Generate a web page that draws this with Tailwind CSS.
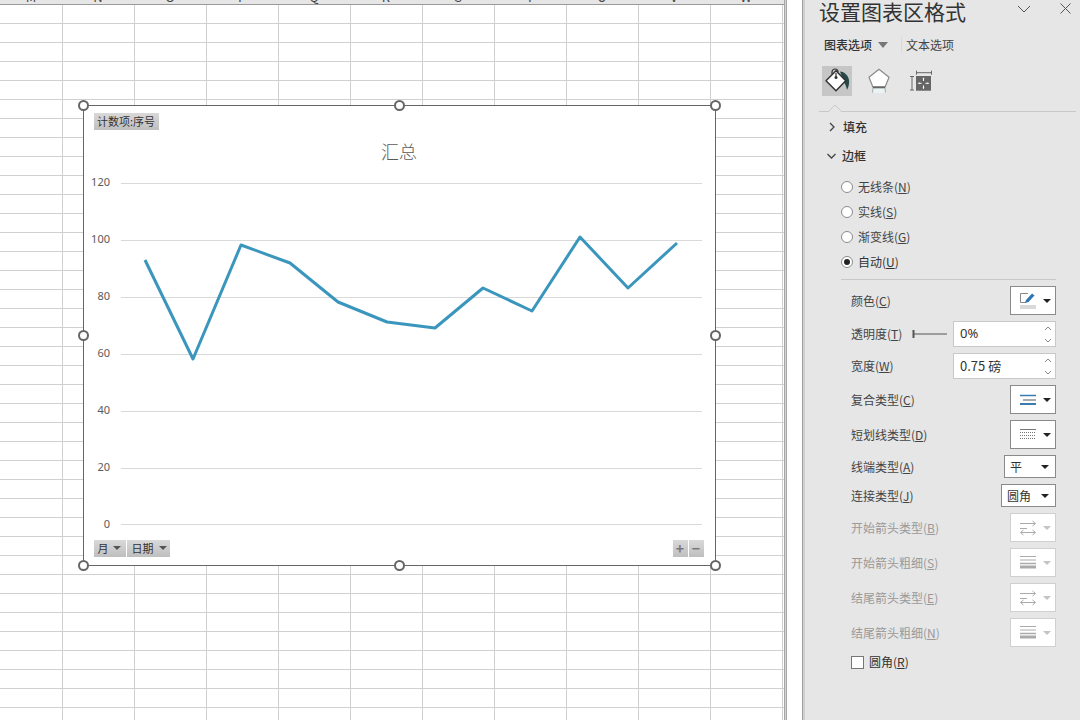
<!DOCTYPE html>
<html lang="zh-CN">
  <head>
    <meta charset="UTF-8" />
    <title>设置图表区格式</title>
    <script src="https://cdn.jsdelivr.net/npm/@tailwindcss/browser@4"></script>
  </head>
  <body class="w-[1080px] h-[720px] overflow-hidden bg-white font-['Noto_Sans_CJK_SC','Noto_Sans',sans-serif] text-xs">
    <div class="flex h-[720px]">
      <!-- sheet -->
      <div class="relative w-[784px] h-full overflow-hidden">
        <div class="flex h-[5px] overflow-hidden bg-[#e6e6e6] border-b border-[#9a9a9a] text-[#444] text-[13px] leading-none">
          <div class="w-[62px] shrink-0 text-center -mt-[10px]">M</div>
          <div class="w-[72px] shrink-0 text-center -mt-[10px]">N</div>
          <div class="w-[72px] shrink-0 text-center -mt-[10px]">O</div>
          <div class="w-[72px] shrink-0 text-center -mt-[10px]">P</div>
          <div class="w-[72px] shrink-0 text-center -mt-[10px]">Q</div>
          <div class="w-[72px] shrink-0 text-center -mt-[10px]">R</div>
          <div class="w-[72px] shrink-0 text-center -mt-[10px]">S</div>
          <div class="w-[72px] shrink-0 text-center -mt-[10px]">T</div>
          <div class="w-[72px] shrink-0 text-center -mt-[10px]">U</div>
          <div class="w-[72px] shrink-0 text-center -mt-[10px]">V</div>
          <div class="w-[72px] shrink-0 text-center -mt-[10px]">W</div>
        </div>
        <div class="h-[715px] bg-[linear-gradient(to_right,transparent_62px,#d0d0d0_62px,#d0d0d0_63px,transparent_63px),linear-gradient(to_bottom,transparent_18px,#d0d0d0_18px)] bg-[length:72px_19px,100%_19px] bg-[position:0_0,0_0]"></div>

        <!-- chart -->
        <div class="absolute left-[83px] top-[105px] w-[633px] h-[461px] bg-white border-[1.5px] border-[#666]">
          <svg class="absolute -left-[1.5px] -top-[1.5px]" width="633" height="461" viewBox="83 105 633 461" fill="none">
            <g stroke="#d9d9d9">
              <path d="M121 183.500H702M121 240.500H702M121 297.500H702M121 354.500H702M121 411.500H702M121 468.500H702M121 524.500H702" />
            </g>
            <g fill="#595959" font-size="11" text-anchor="end" font-family="Noto Sans, sans-serif" opacity="0.99">
              <text x="110" y="186">120</text>
              <text x="110" y="243">100</text>
              <text x="110" y="300">80</text>
              <text x="110" y="357">60</text>
              <text x="110" y="414">40</text>
              <text x="110" y="471">20</text>
              <text x="110" y="528">0</text>
            </g>
            <text x="399" y="159" text-anchor="middle" fill="#595959" font-size="18" font-weight="300" opacity="0.99">汇总</text>
            <polyline stroke="#3a96bd" stroke-width="3" stroke-linejoin="round" points="145,260 193,359 241,245 290,263 338,302 387,322 435,328 483,288 532,311 580,237 628,288 677,243" />
          </svg>
          <div class="absolute left-[9.500px] top-[6.500px] w-[65px] h-[17px] flex items-center justify-center bg-gradient-to-b from-[#d9d9d9] to-[#bfbfbf] text-[#333] text-[11px] leading-none whitespace-nowrap">计数项:序号</div>
          <div class="absolute left-[9.500px] top-[433.500px] flex gap-px">
            <div class="h-[17px] w-[32px] pl-[4px] flex items-center gap-[4px] bg-gradient-to-b from-[#d9d9d9] to-[#bfbfbf] text-[#333] text-[11px] leading-none">月<span class="w-0 h-0 border-x-[4px] border-x-transparent border-t-[4px] border-t-[#555]"></span></div>
            <div class="h-[17px] w-[43px] pl-[5px] flex items-center gap-[5px] bg-gradient-to-b from-[#d9d9d9] to-[#bfbfbf] text-[#333] text-[11px] leading-none">日期<span class="w-0 h-0 border-x-[4px] border-x-transparent border-t-[4px] border-t-[#555]"></span></div>
          </div>
          <div class="absolute left-[588.500px] top-[433.500px] flex gap-px">
            <div class="w-[15px] h-[17px] flex items-center justify-center bg-gradient-to-b from-[#d9d9d9] to-[#bfbfbf] text-[#777] text-[14px] font-bold leading-none">+</div>
            <div class="w-[15px] h-[17px] flex items-center justify-center bg-gradient-to-b from-[#d9d9d9] to-[#bfbfbf] text-[#777] text-[14px] font-bold leading-none">−</div>
          </div>
        </div>
        <!-- selection handles -->
        <div class="absolute left-[78px] top-[100px] w-[11px] h-[11px] rounded-full bg-white border-2 border-[#666]"></div>
        <div class="absolute left-[394px] top-[100px] w-[11px] h-[11px] rounded-full bg-white border-2 border-[#666]"></div>
        <div class="absolute left-[710px] top-[100px] w-[11px] h-[11px] rounded-full bg-white border-2 border-[#666]"></div>
        <div class="absolute left-[78px] top-[330px] w-[11px] h-[11px] rounded-full bg-white border-2 border-[#666]"></div>
        <div class="absolute left-[710px] top-[330px] w-[11px] h-[11px] rounded-full bg-white border-2 border-[#666]"></div>
        <div class="absolute left-[78px] top-[560px] w-[11px] h-[11px] rounded-full bg-white border-2 border-[#666]"></div>
        <div class="absolute left-[394px] top-[560px] w-[11px] h-[11px] rounded-full bg-white border-2 border-[#666]"></div>
        <div class="absolute left-[710px] top-[560px] w-[11px] h-[11px] rounded-full bg-white border-2 border-[#666]"></div>
      </div>

      <!-- gap between sheet and pane -->
      <div class="w-[3px] bg-[#d4d4d4] border-x border-[#a6a6a6]"></div>
      <div class="w-[15px] bg-white"></div>
      <div class="w-[3px] bg-[#d0d0d0] border-l border-[#a0a0a0]"></div>

      <!-- format pane -->
      <div class="w-[275px] h-full bg-[#e6e6e6] text-[#444] flex flex-col">
        <div class="h-[25px] flex items-center pl-[14px] -mt-[1px]">
          <div class="text-[21px] leading-none text-[#333] w-[199px] shrink-0">设置图表区格式</div>
          <svg width="14" height="8" viewBox="0 0 14 8" fill="none" stroke="#555" class="ml-[-1px] -mt-[6px]"><path d="M1 1l6 6 6-6" /></svg>
          <svg width="11" height="11" viewBox="0 0 11 11" fill="none" stroke="#555" class="ml-[29px] -mt-[6px]"><path d="M.5.5l10 10M10.500.5l-10 10" /></svg>
        </div>

        <div class="mt-[13px] h-[16px] flex items-center pl-[19px] leading-none">
          <span class="text-[#333] font-medium">图表选项</span>
          <span class="ml-[6px] w-0 h-0 border-x-[5px] border-x-transparent border-t-[6px] border-t-[#777]"></span>
          <span class="ml-[13px] w-px h-[16px] bg-[#d9d9d9]"></span>
          <span class="ml-[4px] text-[#444]">文本选项</span>
        </div>

        <div class="mt-[13px] h-[30px] flex items-center pl-[17px]">
          <div class="w-[30px] h-[30px] bg-[#c6c6c6] flex items-center justify-center">
            <svg width="30" height="30" viewBox="0 0 30 30" fill="none">
              <path d="M18 5.500c3.500 0 8 3 9 8.500.5 3.500-.5 7-2 10-.5-3-1.500-5.500-3-7.500z" fill="#27484a" />
              <path d="M14 4.700L23.700 14.700 14 24.700 4 14.700z" fill="#fff" stroke="#333" stroke-width="1.500" stroke-linejoin="round" />
              <path d="M10 8V6a3 3 0 0 1 6 0" stroke="#333" stroke-width="1.200" />
              <path d="M14 7V11" stroke="#333" stroke-width="1.200" />
              <circle cx="14" cy="11.500" r="1.500" fill="#333" />
            </svg>
          </div>
          <svg class="ml-[15px]" width="24" height="26" viewBox="0 0 24 26" fill="none">
            <path d="M6 19.300h12l1.500 5.400h-15z" fill="#eaf4f4" />
            <path d="M12 1.300l10 8-4 10H6l-4-10z" fill="#fff" stroke="#8a8a8a" stroke-width="1.200" stroke-linejoin="round" />
            <path d="M6 19.300h12" stroke="#666" stroke-width="2" />
            <path d="M6 20l-.5 4.700M18 20l.5 4.700" stroke="#aaa" />
          </svg>
          <svg class="ml-[18px]" width="24" height="26" viewBox="0 0 24 26" fill="none">
            <path d="M7.500 2.700v4M22.500 2.700v4M7.500 4.700h15M1 8.500h4M1 22h4M3 8.500V22" stroke="#666" />
            <rect x="7" y="8" width="15" height="14.700" fill="#666" />
            <path d="M14.500 10v3M14.500 17.500v3M9.500 15.300h3M16.500 15.300h3" stroke="#fff" />
            <path d="M13.500 11l1-1.500 1 1.500zM13.500 19.500l1 1.500 1-1.500zM10.500 14.300l-1.500 1 1.500 1zM18.500 14.300l1.500 1-1.500 1z" fill="#fff" />
          </svg>
        </div>

        <div class="relative mt-[15px] ml-[14px] w-[257px] border-t border-[#c8c8c8]">
          <svg class="absolute left-[9px] -top-[8px]" width="14" height="8" viewBox="0 0 14 8" fill="none"><path d="M0 8L7 1l7 7" fill="#e6e6e6" stroke="#c8c8c8" /></svg>
        </div>

        <div class="mt-[7px] h-[16px] flex items-center pl-[24px] gap-[7px] text-[#333] font-medium leading-none">
          <svg width="7" height="10" viewBox="0 0 7 10" fill="none" stroke="#444" stroke-width="1.300"><path d="M1 1l4 4-4 4" /></svg>
          <span>填充</span>
        </div>
        <div class="mt-[13px] h-[16px] flex items-center pl-[22px] gap-[6px] text-[#333] font-medium leading-none">
          <svg width="9" height="7" viewBox="0 0 9 7" fill="none" stroke="#444" stroke-width="1.300"><path d="M.5 1l4 4 4-4" /></svg>
          <span>边框</span>
        </div>

        <div class="mt-[10px] flex flex-col pl-[36px]">
          <div class="h-[25px] flex items-center gap-[5px]"><span class="w-3 h-3 rounded-full bg-white border border-[#8c8c8c]"></span><span>无线条(<u>N</u>)</span></div>
          <div class="h-[25px] flex items-center gap-[5px]"><span class="w-3 h-3 rounded-full bg-white border border-[#8c8c8c]"></span><span>实线(<u>S</u>)</span></div>
          <div class="h-[25px] flex items-center gap-[5px]"><span class="w-3 h-3 rounded-full bg-white border border-[#8c8c8c]"></span><span>渐变线(<u>G</u>)</span></div>
          <div class="h-[25px] flex items-center gap-[5px] text-[#333]"><span class="w-3 h-3 rounded-full bg-white border border-[#8c8c8c] flex items-center justify-center"><span class="w-[6px] h-[6px] rounded-full bg-[#222]"></span></span><span>自动(<u>U</u>)</span></div>
        </div>

        <div class="mt-[5px] ml-[36px] w-[215px] border-t border-[#c8c8c8]"></div>

        <div class="mt-[6px] flex flex-col gap-[6px] pl-[46px] pr-[24px]">
          <div class="h-[29px] flex items-center justify-between">
            <span>颜色(<u>C</u>)</span>
            <div class="w-[46px] h-[29px] bg-white border border-[#8a8a8a] flex items-center pl-[9px] gap-[7px]">
              <svg width="16" height="18" viewBox="0 0 16 18" fill="none">
                <path d="M8 1.500H.5v9H6" stroke="#888" />
                <path d="M5 11l1-3 6-6.500 2.500 2L8.500 10z" fill="#2e75b6" />
                <rect y="13" width="16" height="4" fill="#d9d9d9" />
              </svg>
              <span class="w-0 h-0 border-x-[4px] border-x-transparent border-t-[4px] border-t-[#222]"></span>
            </div>
          </div>

          <div class="h-[26px] flex items-center">
            <span>透明度(<u>T</u>)</span>
            <svg class="ml-[10px]" width="36" height="10" viewBox="0 0 36 10" fill="none" stroke="#555"><path d="M1.500 1v8" stroke-width="2" /><path d="M2 5h33" /></svg>
            <div class="ml-auto w-[103px] h-[26px] bg-white border border-[#c8c8c8] flex items-center justify-between pl-[6px] pr-[3px] text-[#333]">
              <span class="text-[13px] font-['Noto_Sans',sans-serif]">0%</span>
              <span class="flex flex-col gap-[7px]">
                <svg width="8" height="5" viewBox="0 0 8 5" fill="none" stroke="#888"><path d="M1 4l3-3 3 3" /></svg>
                <svg width="8" height="5" viewBox="0 0 8 5" fill="none" stroke="#888"><path d="M1 1l3 3 3-3" /></svg>
              </span>
            </div>
          </div>

          <div class="h-[26px] flex items-center justify-between">
            <span>宽度(<u>W</u>)</span>
            <div class="w-[103px] h-[26px] bg-white border border-[#c8c8c8] flex items-center justify-between pl-[6px] pr-[3px] text-[#333]">
              <span class="text-[13px]">0.75 磅</span>
              <span class="flex flex-col gap-[7px]">
                <svg width="8" height="5" viewBox="0 0 8 5" fill="none" stroke="#888"><path d="M1 4l3-3 3 3" /></svg>
                <svg width="8" height="5" viewBox="0 0 8 5" fill="none" stroke="#888"><path d="M1 1l3 3 3-3" /></svg>
              </span>
            </div>
          </div>

          <div class="h-[29px] flex items-center justify-between">
            <span>复合类型(<u>C</u>)</span>
            <div class="w-[46px] h-[29px] bg-white border border-[#8a8a8a] flex items-center pl-[9px] gap-[7px]">
              <svg width="16" height="12" viewBox="0 0 16 12" fill="none">
                <path d="M0 1.500h16" stroke="#3a7cb0" stroke-width="1.500" />
                <path d="M3 6h13" stroke="#555" />
                <path d="M0 10h16" stroke="#3a7cb0" stroke-width="2" />
              </svg>
              <span class="w-0 h-0 border-x-[4px] border-x-transparent border-t-[4px] border-t-[#222]"></span>
            </div>
          </div>

          <div class="h-[29px] flex items-center justify-between">
            <span>短划线类型(<u>D</u>)</span>
            <div class="w-[46px] h-[29px] bg-white border border-[#8a8a8a] flex items-center pl-[9px] gap-[7px]">
              <svg width="16" height="11" viewBox="0 0 16 11" fill="none" stroke="#777">
                <path d="M0 .5h16" />
                <path d="M0 3.500h16M0 6.500h16M0 9.500h16" stroke-dasharray="1 1" />
              </svg>
              <span class="w-0 h-0 border-x-[4px] border-x-transparent border-t-[4px] border-t-[#222]"></span>
            </div>
          </div>

          <div class="h-[23px] flex items-center justify-between">
            <span>线端类型(<u>A</u>)</span>
            <div class="w-[52px] h-[23px] bg-white border border-[#8a8a8a] flex items-center justify-between pl-[5px] pr-[6px] text-[#333]">
              <span>平</span>
              <span class="w-0 h-0 border-x-[4px] border-x-transparent border-t-[4px] border-t-[#222]"></span>
            </div>
          </div>

          <div class="h-[23px] flex items-center justify-between">
            <span>连接类型(<u>J</u>)</span>
            <div class="w-[55px] h-[23px] bg-white border border-[#8a8a8a] flex items-center justify-between pl-[5px] pr-[6px] text-[#333]">
              <span>圆角</span>
              <span class="w-0 h-0 border-x-[4px] border-x-transparent border-t-[4px] border-t-[#222]"></span>
            </div>
          </div>

          <div class="h-[29px] flex items-center justify-between text-[#9a9a9a]">
            <span>开始箭头类型(<u>B</u>)</span>
            <div class="w-[46px] h-[29px] bg-white border border-[#d0d0d0] flex items-center pl-[9px] gap-[7px]">
              <svg width="16" height="16" viewBox="0 0 16 16" fill="none" stroke="#aaa">
                <path d="M0 3.500h15M12.500 1l3 2.500-3 2.500M0 8.500h7M1 12.500h14M3.500 10l-3 2.500 3 2.500M12.500 10l3 2.500-3 2.500" />
              </svg>
              <span class="w-0 h-0 border-x-[4px] border-x-transparent border-t-[4px] border-t-[#c4c4c4]"></span>
            </div>
          </div>

          <div class="h-[29px] flex items-center justify-between text-[#9a9a9a]">
            <span>开始箭头粗细(<u>S</u>)</span>
            <div class="w-[46px] h-[29px] bg-white border border-[#d0d0d0] flex items-center pl-[9px] gap-[7px]">
              <svg width="16" height="13" viewBox="0 0 16 13" fill="none" stroke="#aaa">
                <path d="M0 .5h16M0 4h16" />
                <path d="M0 7.500h16" stroke-width="1.500" />
                <path d="M0 11h16" stroke-width="3" />
              </svg>
              <span class="w-0 h-0 border-x-[4px] border-x-transparent border-t-[4px] border-t-[#c4c4c4]"></span>
            </div>
          </div>

          <div class="h-[29px] flex items-center justify-between text-[#9a9a9a]">
            <span>结尾箭头类型(<u>E</u>)</span>
            <div class="w-[46px] h-[29px] bg-white border border-[#d0d0d0] flex items-center pl-[9px] gap-[7px]">
              <svg width="16" height="16" viewBox="0 0 16 16" fill="none" stroke="#aaa">
                <path d="M0 3.500h15M12.500 1l3 2.500-3 2.500M0 8.500h7M1 12.500h14M3.500 10l-3 2.500 3 2.500M12.500 10l3 2.500-3 2.500" />
              </svg>
              <span class="w-0 h-0 border-x-[4px] border-x-transparent border-t-[4px] border-t-[#c4c4c4]"></span>
            </div>
          </div>

          <div class="h-[29px] flex items-center justify-between text-[#9a9a9a]">
            <span>结尾箭头粗细(<u>N</u>)</span>
            <div class="w-[46px] h-[29px] bg-white border border-[#d0d0d0] flex items-center pl-[9px] gap-[7px]">
              <svg width="16" height="13" viewBox="0 0 16 13" fill="none" stroke="#aaa">
                <path d="M0 .5h16M0 4h16" />
                <path d="M0 7.500h16" stroke-width="1.500" />
                <path d="M0 11h16" stroke-width="3" />
              </svg>
              <span class="w-0 h-0 border-x-[4px] border-x-transparent border-t-[4px] border-t-[#c4c4c4]"></span>
            </div>
          </div>

          <div class="h-[14px] mt-[2px] flex items-center gap-[5px] text-[#333]">
            <span class="w-[13px] h-[13px] bg-white border border-[#777]"></span>
            <span>圆角(<u>R</u>)</span>
          </div>
        </div>
      </div>
    </div>
  </body>
</html>
